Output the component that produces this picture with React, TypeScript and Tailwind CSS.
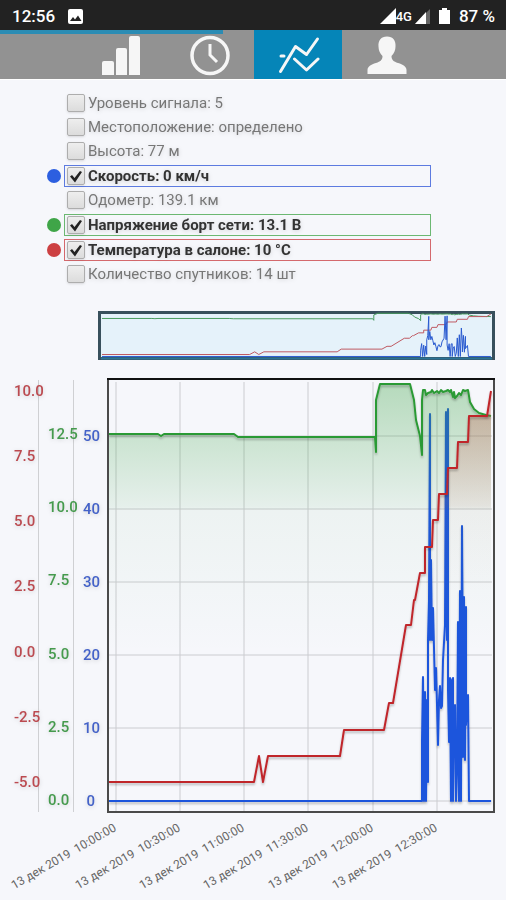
import { useState } from "react";
import type { ReactNode } from "react";

const BLUE = "#1f55dc";
const GREEN = "#2c9a34";
const RED = "#c0252b";

type Metric = { id: string; text: string; on?: boolean; dot?: string; frame?: string };

const metrics: Metric[] = [
  { id: "signal", text: "Уровень сигнала: 5" },
  { id: "location", text: "Местоположение: определено" },
  { id: "altitude", text: "Высота: 77 м" },
  { id: "speed", text: "Скорость: 0 км/ч", on: true, dot: "bg-[#2c5fe0]", frame: "border-[#5d7be0]" },
  { id: "odometer", text: "Одометр: 139.1 км" },
  { id: "voltage", text: "Напряжение борт сети: 13.1 В", on: true, dot: "bg-[#3fa548]", frame: "border-[#6cb872]" },
  { id: "temperature", text: "Температура в салоне: 10 °C", on: true, dot: "bg-[#cc4042]", frame: "border-[#d4696d]" },
  { id: "satellites", text: "Количество спутников: 14 шт" },
];

const redPoints =
  "109,782 254,782 259,756 263,782 268,756 340,756 344,730 384,730 389,703 393,703 406,625 411,625 414,600 415,600 420,573 425,573 425,547 432,547 433,520 438,520 439,494 447,494 448,468 457,468 458,442 468,442 469,416 487,416 491,391";

const greenPoints =
  "109,434 158,434 161,436 164,434 234,434 238,437 375,437 376,452 376,400 380,384 410,384 414,400 416,420 420,436 422,455 422,400 423,390 425,390 426,395 428,393 431,392 432,390 434,393 437,391 439,393 441,390 443,392 446,391 448,390 450,392 451,390 453,397 454,392 455,398 457,396 459,393 461,395 463,390 465,391 468,390 470,402 474,409 479,413 486,415 491,416";

const bluePoints =
  "109,801 422,801 422,740 423,677 424,801 425,692 426,801 427,700 428,782 428,640 429,600 430,414 430,640 431,560 432,640 433,608 434,648 435,690 436,668 437,705 438,745 439,700 440,686 441,708 442,706 443,660 445,625 446,412 447,640 448,409 448,690 449,742 450,678 451,801 452,680 453,678 453,801 454,720 455,705 456,801 457,770 458,622 459,801 460,591 461,801 462,526 463,680 463,757 464,597 465,760 466,607 466,725 468,695 469,801 491,801";

const columns = [
  { x: 116, label: "13 дек 2019  10:00:00" },
  { x: 180, label: "13 дек 2019  10:30:00" },
  { x: 244, label: "13 дек 2019  11:00:00" },
  { x: 308, label: "13 дек 2019  11:30:00" },
  { x: 373, label: "13 дек 2019  12:00:00" },
  { x: 437, label: "13 дек 2019  12:30:00" },
];

const speedTicks = [
  { y: 436, label: "50" },
  { y: 509, label: "40" },
  { y: 582, label: "30" },
  { y: 655, label: "20" },
  { y: 728, label: "10" },
  { y: 801, label: "0" },
];

const voltageTicks = [
  { y: 434, label: "12.5" },
  { y: 507, label: "10.0" },
  { y: 580, label: "7.5" },
  { y: 654, label: "5.0" },
  { y: 727, label: "2.5" },
  { y: 800, label: "0.0" },
];

const temperatureTicks = [
  { y: 391, label: "10.0" },
  { y: 456, label: "7.5" },
  { y: 521, label: "5.0" },
  { y: 586, label: "2.5" },
  { y: 652, label: "0.0" },
  { y: 717, label: "-2.5" },
  { y: 782, label: "-5.0" },
];

function StatusBar() {
  return (
    <header className="flex h-[30px] items-center justify-between bg-[#222222] pl-3 pr-[11px] pt-[2px] text-[17px] font-medium leading-none text-white">
      <div className="flex items-center gap-[13px]">
        <span>12:56</span>
        <svg width="15" height="15" viewBox="0 0 15 15" aria-hidden="true">
          <rect width="15" height="15" rx="2" fill="#fff" />
          <path d="M2 12 5 8l2 2.500 3-4 3.500 5.500z" fill="#222" />
        </svg>
      </div>
      <div className="flex items-center">
        <svg width="16" height="16" viewBox="0 0 16 16" aria-hidden="true">
          <path d="M16 0v16H0z" fill="#fff" />
        </svg>
        <span className="text-[13px]">4G</span>
        <svg className="ml-[3px]" width="15" height="16" viewBox="0 0 15 16" aria-hidden="true">
          <path d="M15 1v15H0z" fill="#666" />
          <path d="M11 4v12H0z" fill="#fff" />
        </svg>
        <svg className="ml-[9px] mr-[9px]" width="11" height="16" viewBox="0 0 11 16" aria-hidden="true">
          <path d="M3 0h5v2h3v14H0V2h3z" fill="#fff" />
        </svg>
        <span>87 %</span>
      </div>
    </header>
  );
}

function Tab({ label, active, onClick, children }: { label: string; active: boolean; onClick: () => void; children: ReactNode }) {
  return (
    <button
      type="button"
      aria-label={label}
      onClick={onClick}
      className={`flex w-[88px] items-center justify-center ${active ? "bg-[#0585b8]" : ""}`}
    >
      <svg width="44" height="44" viewBox="0 0 44 44" fill="none" aria-hidden="true">
        {children}
      </svg>
    </button>
  );
}

function Nav() {
  const [tab, setTab] = useState(2);
  return (
    <nav className="relative flex h-[50px] justify-center border-b border-white bg-[#929292] pl-[2px]">
      <Tab label="Сигнал" active={tab === 0} onClick={() => setTab(0)}>
        <g fill="#f6f6f6">
          <path d="M2 42V30q0-2 2-2h8q2 0 2 2v12z" />
          <path d="M16 42V17q0-2 2-2h7q2 0 2 2v25z" />
          <path d="M29 42V5q0-2 2-2h7q2 0 2 2v37z" />
        </g>
      </Tab>
      <Tab label="История" active={tab === 1} onClick={() => setTab(1)}>
        <circle cx="22" cy="22.500" r="18" stroke="#f6f6f6" strokeWidth="3.500" />
        <path d="M22 11v11l7 7" stroke="#f6f6f6" strokeWidth="3" />
      </Tab>
      <Tab label="Графики" active={tab === 2} onClick={() => setTab(2)}>
        <g stroke="#f6f6f6" strokeWidth="3" strokeLinecap="round" strokeLinejoin="round">
          <path d="M4.500 38.500 19.500 13.500 30.500 21.500 41.500 6" />
          <path d="M18.500 26 30.500 37 42 26" />
          <path d="M5 23h3" />
        </g>
      </Tab>
      <Tab label="Профиль" active={tab === 3} onClick={() => setTab(3)}>
        <path
          d="M23 3.500c-6 0-9 4-8.500 10 0 4 1.500 7 4 9.500 0 4-2 5.500-6.500 7-5 1.500-8.500 3.500-8.500 7V41h39v-4c0-3.500-3.500-5.500-8.500-7-4.500-1.500-6.500-3-6.500-7 2.500-2.500 4-5.500 4-9.500C32 7.500 29 3.500 23 3.500z"
          fill="#f6f6f6"
        />
      </Tab>
      <div className="absolute left-0 top-0 h-1 w-[44%] bg-[#2b8cb4]" />
    </nav>
  );
}

function MetricRow({ metric }: { metric: Metric }) {
  const [on, setOn] = useState(Boolean(metric.on));
  return (
    <li className="flex items-center">
      <span className={`mr-[3px] size-[14px] rounded-full ${metric.dot ?? ""}`} />
      <label
        htmlFor={metric.id}
        className={`flex w-[80%] items-center gap-[3px] border pl-[2px] text-[15px] ${
          metric.frame ? `mb-px mt-[2px] h-[22px] ${metric.frame}` : "h-6 border-transparent"
        } ${on ? "font-bold text-[#333]" : "text-[#777]"}`}
      >
        <span className="relative flex">
          <input
            id={metric.id}
            type="checkbox"
            checked={on}
            onChange={() => setOn(!on)}
            className="size-[18px] appearance-none rounded-[2px] border border-[#adadad] bg-linear-to-b from-[#eeeeee] to-[#dcdcdc] shadow-sm"
          />
          {on && (
            <svg className="pointer-events-none absolute left-0 top-0" width="18" height="18" viewBox="0 0 18 18" aria-hidden="true">
              <path d="M3 9.500 5 8l2.500 3L13 4l2 1-7 10.500z" fill="#222" />
            </svg>
          )}
        </span>
        <span className="whitespace-nowrap drop-shadow-sm">{metric.text}</span>
      </label>
    </li>
  );
}

function Overview() {
  return (
    <svg viewBox="0 300 506 70" className="block w-full" role="img" aria-label="Обзор">
      <rect x="99.500" y="312.500" width="394" height="46" fill="#e5f2fa" stroke="#38505c" strokeWidth="3" />
      <path d="M101 358.500H492" stroke="#2a7395" strokeWidth="2" />
      <g fill="none" strokeWidth="1" strokeLinejoin="round" transform="translate(102 314) scale(1.018 0.1036) translate(-109 -391)">
        <polyline points={greenPoints} stroke="#4a9c60" vectorEffect="non-scaling-stroke" />
        <polyline points={redPoints} stroke="#bf5a62" vectorEffect="non-scaling-stroke" />
        <polyline points={bluePoints} stroke="#2a5bd0" vectorEffect="non-scaling-stroke" />
      </g>
    </svg>
  );
}

function Chart() {
  return (
    <svg viewBox="0 370 506 530" className="block w-full" role="img" aria-label="График показаний">
      <defs>
        <linearGradient id="greenFill" gradientUnits="userSpaceOnUse" x1="0" y1="380" x2="0" y2="801">
          <stop offset="0" stopColor="#3fa548" stopOpacity="0.36" />
          <stop offset="0.300" stopColor="#3fa548" stopOpacity="0.09" />
          <stop offset="0.310" stopColor="#3fa548" stopOpacity="0.050" />
          <stop offset="0.650" stopColor="#3fa548" stopOpacity="0" />
        </linearGradient>
        <linearGradient id="redFill" gradientUnits="userSpaceOnUse" x1="0" y1="391" x2="0" y2="801">
          <stop offset="0" stopColor="#cc5048" stopOpacity="0.36" />
          <stop offset="0.280" stopColor="#cc5048" stopOpacity="0.08" />
          <stop offset="0.290" stopColor="#cc5048" stopOpacity="0.030" />
          <stop offset="0.500" stopColor="#cc5048" stopOpacity="0" />
        </linearGradient>
        <filter id="lineShadow" x="-5%" y="-5%" width="110%" height="115%">
          <feDropShadow dx="0" dy="2" stdDeviation="1" floodColor="#000" floodOpacity="0.25" />
        </filter>
      </defs>

      <path d="M38.500 380V812M73.500 380V812" stroke="#cfd0d3" />
      {columns.map((c) => (
        <path key={c.x} d={`M${c.x} 382V811`} stroke="#cbccd0" />
      ))}
      {speedTicks.map((t) => (
        <path key={t.y} d={`M109 ${t.y}H492`} stroke="#cbccd0" />
      ))}

      <g fill="none" strokeLinejoin="round">
        <polyline points={bluePoints} stroke={BLUE} strokeWidth="2" filter="url(#lineShadow)" />
        <polygon points={`${greenPoints} 491,801 109,801`} fill="url(#greenFill)" />
        <polyline points={greenPoints} stroke={GREEN} strokeWidth="2" filter="url(#lineShadow)" />
        <polygon points={`${redPoints} 491,801 109,801`} fill="url(#redFill)" />
        <polyline points={redPoints} stroke={RED} strokeWidth="2" filter="url(#lineShadow)" />
      </g>

      <rect x="108" y="379" width="386" height="433" fill="none" stroke="#4a4a4a" strokeWidth="2" />
      <path d="M107 379H495" stroke="#111" strokeWidth="2" />

      <g fontSize="15" fontWeight="500" className="drop-shadow-sm">
        {temperatureTicks.map((t) => (
          <text key={t.y} x="14" y={t.y + 5} fill="#bb4a50">
            {t.label}
          </text>
        ))}
        {voltageTicks.map((t) => (
          <text key={t.y} x="48" y={t.y + 5} fill="#459a4d">
            {t.label}
          </text>
        ))}
        {speedTicks.map((t) => (
          <text key={t.y} x={t.label === "0" ? 95 : 100} y={t.y + 5} textAnchor="end" fill="#4462c8">
            {t.label}
          </text>
        ))}
      </g>

      <g fontSize="12" fill="#666" textAnchor="end">
        {columns.map((c) => (
          <text key={c.x} className="whitespace-pre" transform={`translate(${c.x + 1} 830) rotate(-30)`}>
            {c.label}
          </text>
        ))}
      </g>
    </svg>
  );
}

export default function App() {
  return (
    <div className="min-h-screen w-full bg-[#f6f7fb] font-['Roboto','Noto_Sans',sans-serif]">
      <StatusBar />
      <Nav />
      <main>
        <ul className="pb-[14px] pl-[47px] pt-[11px]">
          {metrics.map((m) => (
            <MetricRow key={m.id} metric={m} />
          ))}
        </ul>
        <Overview />
        <Chart />
      </main>
    </div>
  );
}
